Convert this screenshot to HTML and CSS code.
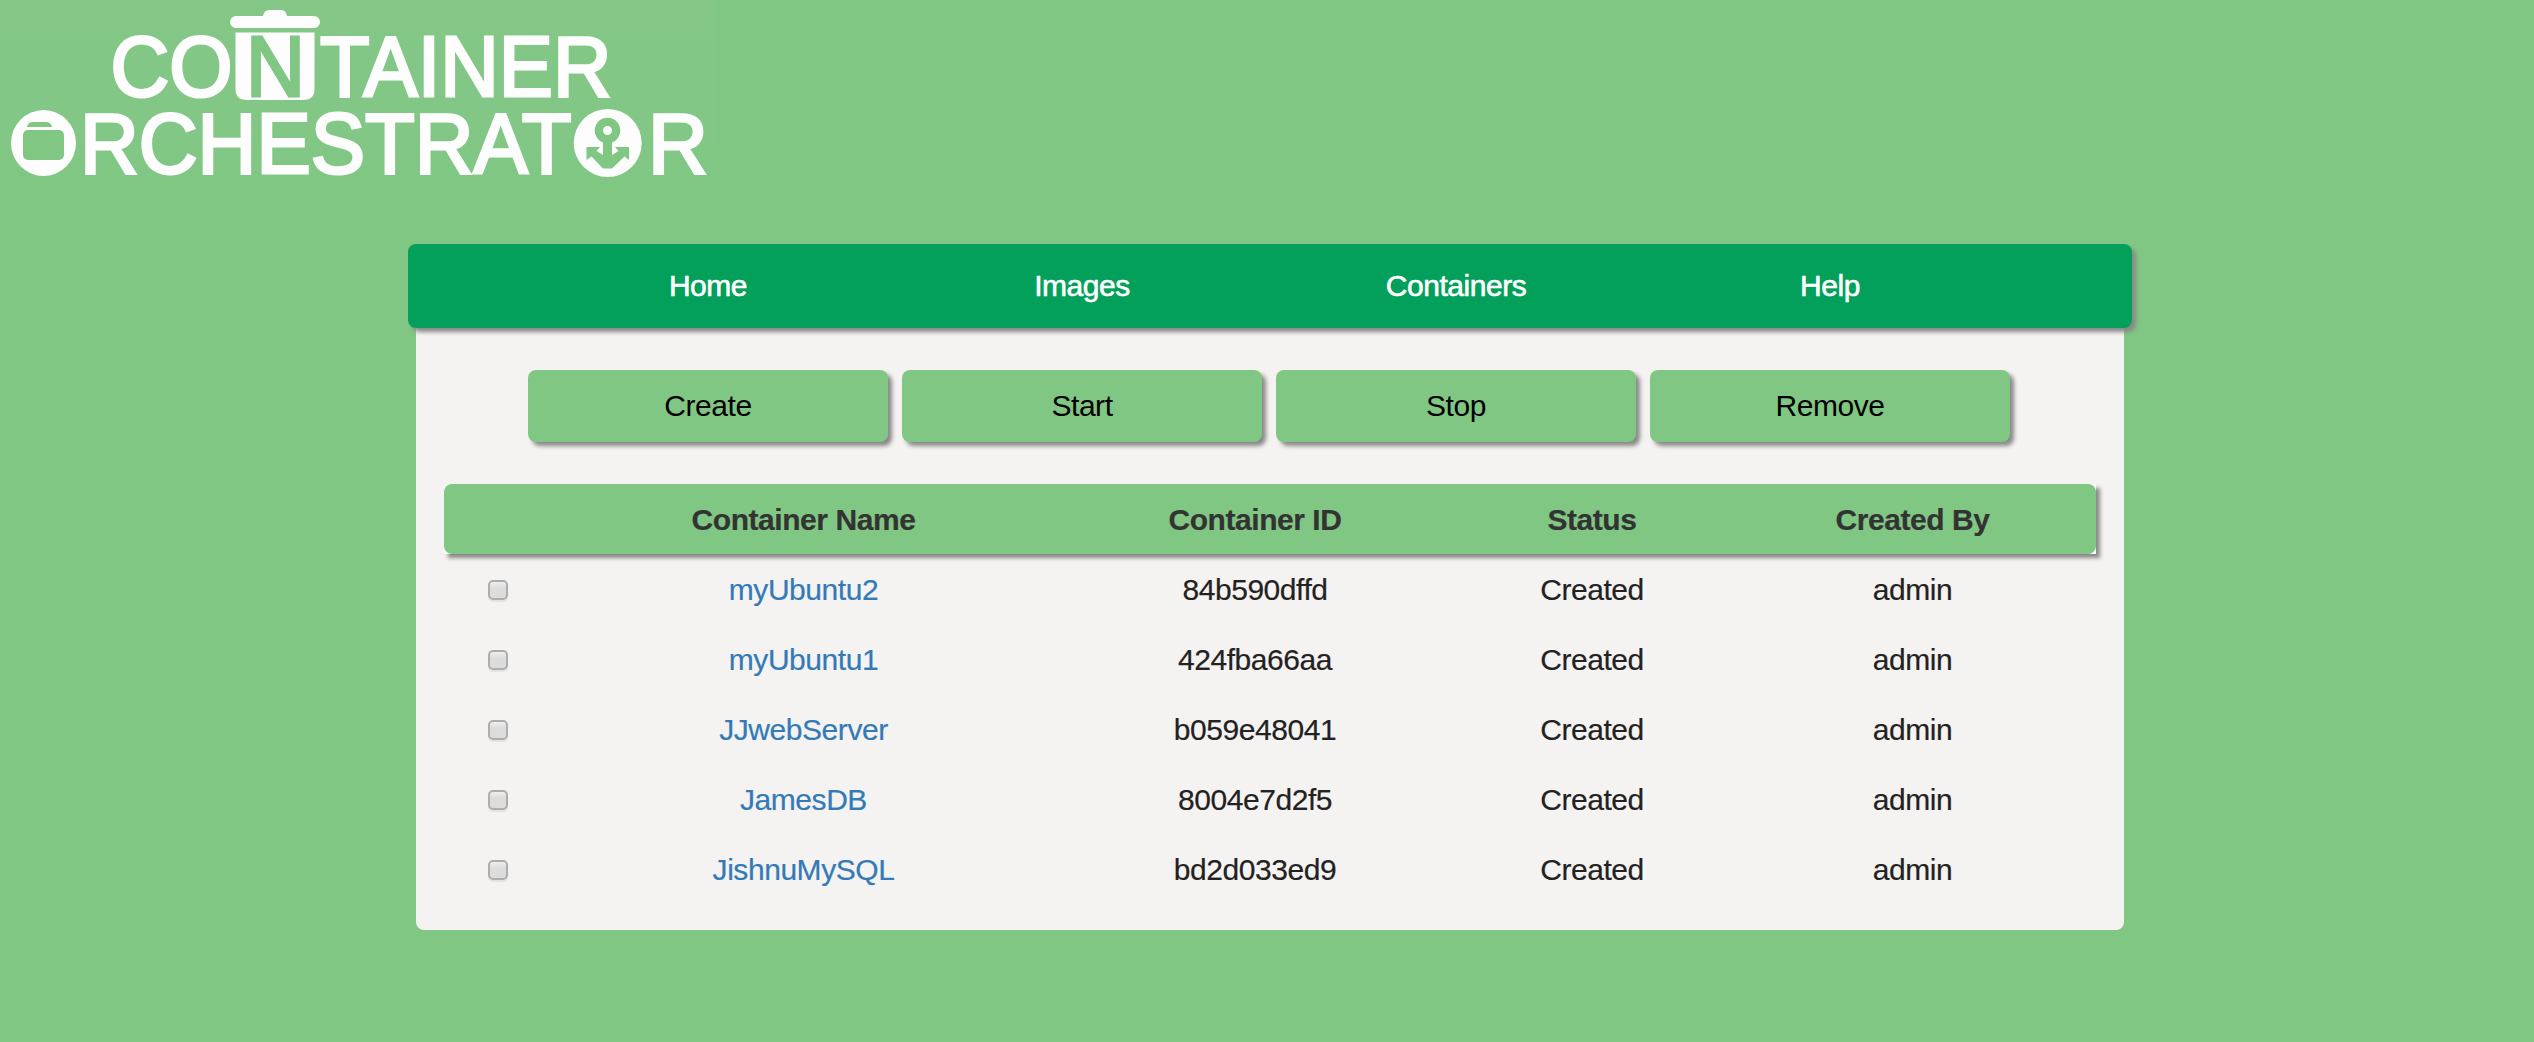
FILE: index.html
```html
<!DOCTYPE html>
<html lang="en">
<head>
<meta charset="utf-8">
<title>Container Orchestrator</title>
<link rel="stylesheet" href="styles.css">
</head>
<body>
<header class="brand">
  <svg class="logo" width="716" height="184" viewBox="0 0 716 184" role="img" aria-label="Container Orchestrator">
    <g class="logo-shape">
      <path d="M263 16 Q264 10 269 10 H281 Q286 10 287 16 H314 A6 6 0 0 1 314 28 H236 A6 6 0 0 1 236 16 Z"/>
      <path d="M235.500 32.500 H314.500 V89 Q314.500 100 303 100 H247 Q235.500 100 235.500 89 Z"/>
      <ellipse cx="43.500" cy="143" rx="32.500" ry="33"/>
      <circle cx="607.700" cy="143" r="34"/>
    </g>
    <g class="logo-cut">
      <rect x="23" y="130" width="41" height="30" rx="5"/>
      <path d="M27 127 Q28 122 33 122 H46 Q51 122 52 127 Z"/>
      <path fill-rule="evenodd" d="M603 142.500 A12.800 12.800 0 1 1 612 142.500 V155 L618.500 151 L615 147 H629 V160 L624.500 156.500 L612 168.500 H603 L591.500 156.500 L586.500 160 V147 H600 L596.500 151 L603 155 Z M607.500 126 A4.500 4.500 0 1 0 607.500 135 A4.500 4.500 0 1 0 607.500 126 Z"/>
    </g>
    <g class="logo-text">
      <text x="110.500" y="96" textLength="122" lengthAdjust="spacingAndGlyphs">CO</text>
      <text class="logo-n" x="246" y="96" textLength="59" lengthAdjust="spacingAndGlyphs">N</text>
      <text x="320" y="96" textLength="291.500" lengthAdjust="spacingAndGlyphs">TAINER</text>
      <text x="80" y="173" textLength="491.500" lengthAdjust="spacingAndGlyphs">RCHESTRAT</text>
      <text x="648" y="173" textLength="60" lengthAdjust="spacingAndGlyphs">R</text>
    </g>
  </svg>
</header>
<nav class="nav">
  <a>Home</a><a>Images</a><a>Containers</a><a>Help</a>
</nav>
<main class="panel">
  <div class="actions">
    <button>Create</button><button>Start</button><button>Stop</button><button>Remove</button>
  </div>
  <div class="table">
    <div class="head"><div class="row head-fill"><span></span><span>Container Name</span><span>Container ID</span><span>Status</span><span>Created By</span></div></div>
    <div class="row"><input type="checkbox"><a>myUbuntu2</a><span>84b590dffd</span><span>Created</span><span>admin</span></div>
    <div class="row"><input type="checkbox"><a>myUbuntu1</a><span>424fba66aa</span><span>Created</span><span>admin</span></div>
    <div class="row"><input type="checkbox"><a>JJwebServer</a><span>b059e48041</span><span>Created</span><span>admin</span></div>
    <div class="row"><input type="checkbox"><a>JamesDB</a><span>8004e7d2f5</span><span>Created</span><span>admin</span></div>
    <div class="row"><input type="checkbox"><a>JishnuMySQL</a><span>bd2d033ed9</span><span>Created</span><span>admin</span></div>
  </div>
</main>
</body>
</html>
```
FILE: styles.css
```css
* { box-sizing: border-box; }
body {
  margin: 0;
  background: #81c784;
  color: #222;
  font: 30px/42px "Liberation Sans", Arial, sans-serif;
  letter-spacing: -0.45px;
}
.brand { height: 244px; }
.logo { display: block; background: linear-gradient(#84c787, #81c784); }
.logo-shape { fill: #fdfdfd; }
.logo-cut { fill: #81c784; }
.logo-text {
  fill: #fdfdfd;
  stroke: #fdfdfd;
  stroke-width: 3;
  font-size: 85px;
  letter-spacing: 0;
}
.logo-n { fill: #81c784; stroke: #81c784; }
.nav {
  position: relative;
  width: 1724px;
  height: 84px;
  margin-left: 408px;
  padding: 0 115px 0 113px;
  display: grid;
  grid-template-columns: repeat(4, 374px);
  justify-content: center;
  align-items: center;
  text-align: center;
  color: #fff;
  background: #02a05b;
  border-radius: 8px;
  box-shadow: 4px 4px 4px #888;
  -webkit-text-stroke: 0.6px #fff;
}
.panel {
  width: 1708px;
  height: 602px;
  margin-left: 416px;
  padding: 42px 28px 26px;
  background: #f5f3f2;
  border-radius: 0 0 8px 8px;
}
.actions {
  display: flex;
  gap: 14px;
  padding-left: 84px;
  margin-bottom: 42px;
}
.actions button {
  width: 360px;
  height: 72px;
  padding: 0;
  border: 0;
  border-radius: 8px;
  background: #81c784;
  color: #000;
  font: inherit;
  letter-spacing: inherit;
  box-shadow: 4px 4px 4px #888;
}
.row {
  display: grid;
  grid-template-columns: 108px 503px 400px 274px 367px;
  height: 70px;
  padding-top: 2px;
  align-items: center;
  justify-items: center;
}
.row a { color: #337ab7; }
.row a, .row span { -webkit-text-stroke: 0.2px currentColor; }
.head { background: #fafafa; box-shadow: 4px 4px 4px #888; }
.head-fill {
  background: #81c784;
  border-radius: 8px;
  color: #333;
  font-weight: bold;
}
.row input {
  appearance: none;
  width: 20px;
  height: 20px;
  margin: 0;
  border: 2px solid #adadad;
  border-radius: 5px;
  background: linear-gradient(#eee, #dcdcdc 40%);
  box-shadow: 0 2px 1px #e3e1e0;
}
```
